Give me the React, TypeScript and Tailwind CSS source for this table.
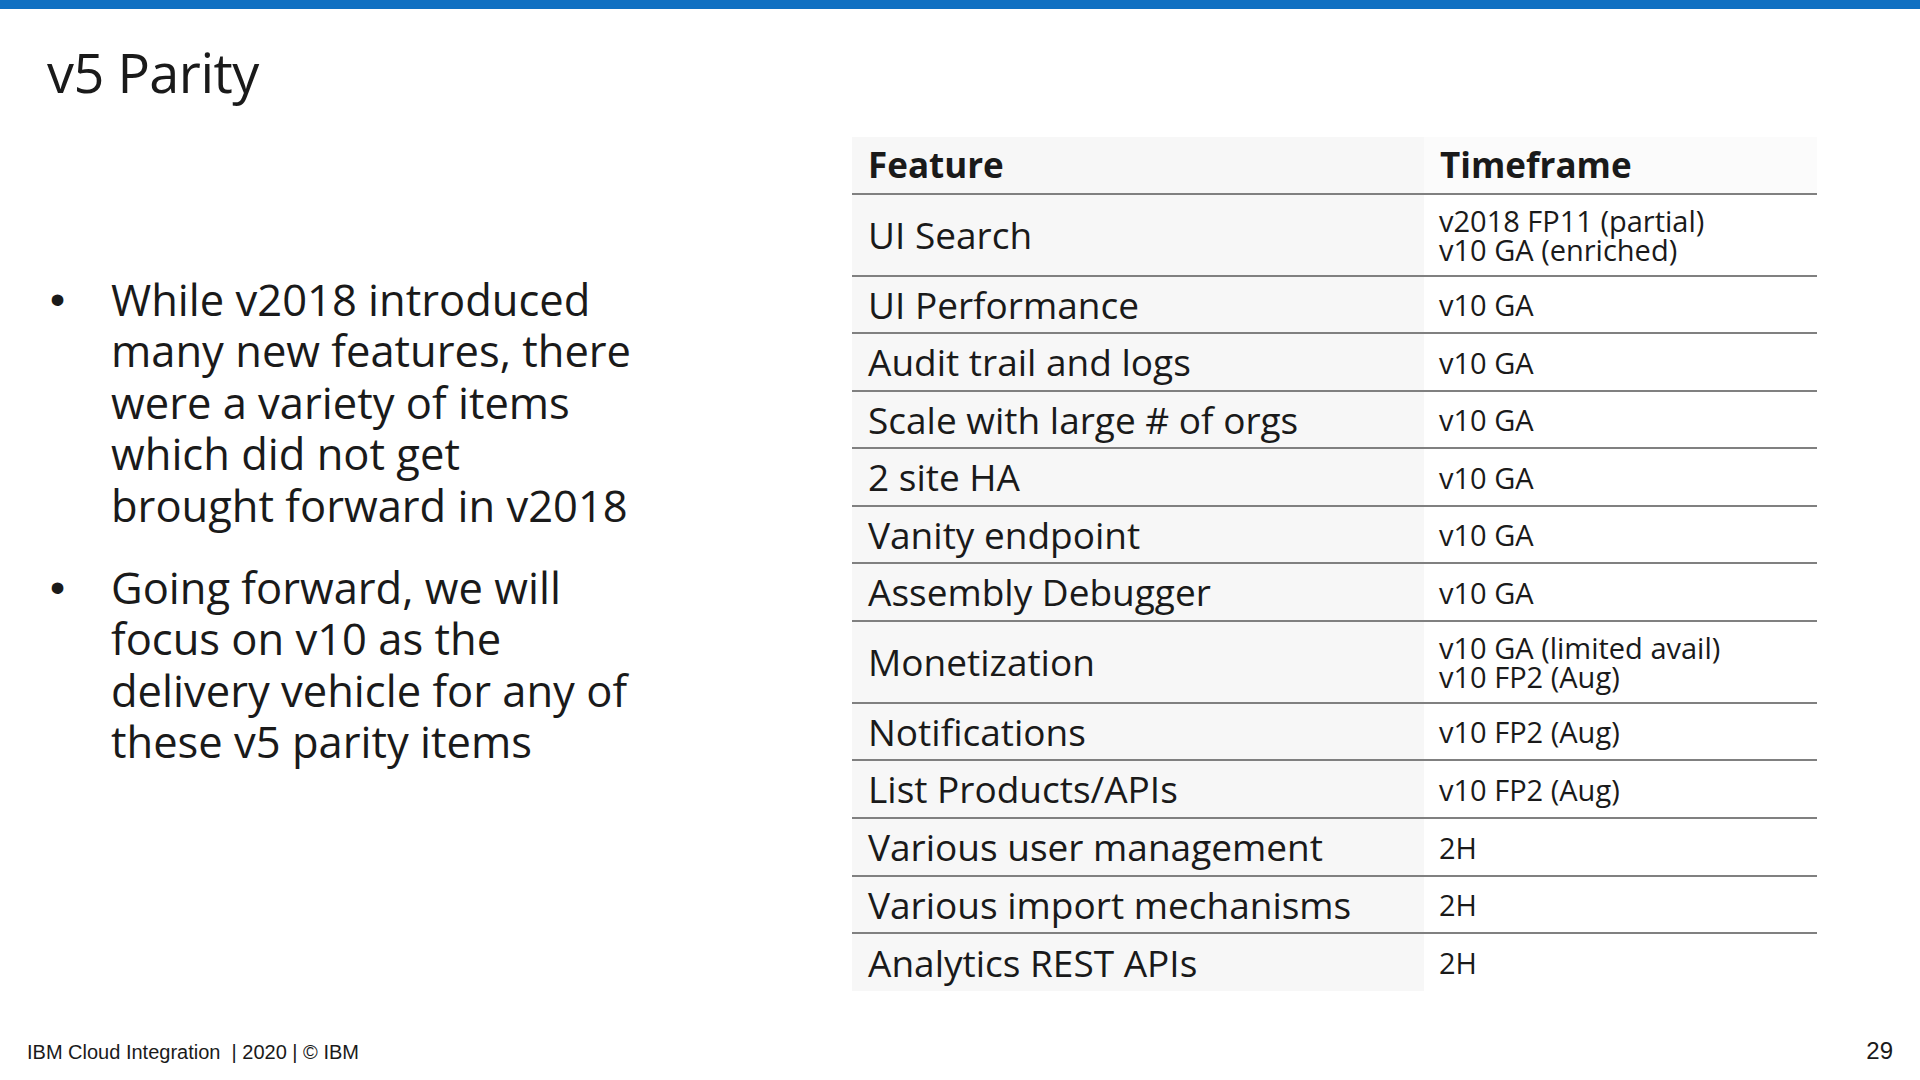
const rows: { feature: string; time: string[]; h: string; last?: boolean }[] = [
  { feature: "UI Search", time: ["v2018 FP11 (partial)", "v10 GA (enriched)"], h: "h-[82px]" },
  { feature: "UI Performance", time: ["v10 GA"], h: "h-[57px]" },
  { feature: "Audit trail and logs", time: ["v10 GA"], h: "h-[58px]" },
  { feature: "Scale with large # of orgs", time: ["v10 GA"], h: "h-[57px]" },
  { feature: "2 site HA", time: ["v10 GA"], h: "h-[58px]" },
  { feature: "Vanity endpoint", time: ["v10 GA"], h: "h-[57px]" },
  { feature: "Assembly Debugger", time: ["v10 GA"], h: "h-[58px]" },
  { feature: "Monetization", time: ["v10 GA (limited avail)", "v10 FP2 (Aug)"], h: "h-[82px]" },
  { feature: "Notifications", time: ["v10 FP2 (Aug)"], h: "h-[57px]" },
  { feature: "List Products/APIs", time: ["v10 FP2 (Aug)"], h: "h-[58px]" },
  { feature: "Various user management", time: ["2H"], h: "h-[58px]" },
  { feature: "Various import mechanisms", time: ["2H"], h: "h-[57px]" },
  { feature: "Analytics REST APIs", time: ["2H"], h: "h-[57px]", last: true },
];

// line breaks kept as in the slide
const bullets = [
  ["While v2018 introduced", "many new features, there", "were a variety of items", "which did not get", "brought forward in v2018"],
  ["Going forward, we will", "focus on v10 as the", "delivery vehicle for any of", "these v5 parity items"],
];

// each line becomes one unbreakable chunk, so the text wraps exactly there
const keepLines = (lines: string[]) => lines.map((l) => l.replace(/ /g, "\u00a0")).join(" ");

function ParityTable() {
  return (
    <div className="w-[965px] grid grid-cols-[572px_393px]">
      <div className="h-[58px] bg-[#f7f7f7] border-b-2 border-[#808080] flex items-center pl-[16px] text-[35px] font-bold">
        Feature
      </div>
      <div className="h-[58px] bg-[#fbfbfb] border-b-2 border-[#808080] flex items-center pl-[16px] text-[35px] font-bold">
        Timeframe
      </div>
      {rows.map((r) => (
        <div key={r.feature} className="contents">
          <div
            className={`${r.h} bg-[#f7f7f7] flex items-center pl-[16px] text-[37px] ${
              r.last ? "" : "border-b-2 border-[#808080]"
            }`}
          >
            {r.feature}
          </div>
          <div
            className={`${r.h} flex items-center pl-[15px] pr-[10px] text-[29px] leading-[29px] ${
              r.last ? "" : "border-b-2 border-[#808080]"
            }`}
          >
            <p>{keepLines(r.time)}</p>
          </div>
        </div>
      ))}
    </div>
  );
}

export default function App() {
  return (
    <div className="w-[1920px] h-[1080px] bg-white flex flex-col overflow-hidden text-[#1a1a1a] font-['Open_Sans',sans-serif]">
      <div className="h-[9px] bg-[#1070c2] shrink-0" />
      <h1 className="pl-[47px] pt-[36px] text-[54px] leading-none font-normal tracking-[-0.5px]">v5 Parity</h1>

      <div className="flex-1 flex items-start">
        <div className="w-[852px] shrink-0 pt-[175px] pl-[50px]">
          <ul className="flex flex-col gap-[31px]">
            {bullets.map((lines) => (
              <li key={lines[0]} className="flex text-[43.5px] leading-[51.4px]">
                <span className="w-[61px] shrink-0 font-['Liberation_Sans',sans-serif] text-[43px]">•</span>
                <p className="w-[560px]">{keepLines(lines)}</p>
              </li>
            ))}
          </ul>
        </div>
        <div className="pt-[38px]">
          <ParityTable />
        </div>
      </div>

      <div className="flex items-baseline justify-between px-[27px] pb-[17px] font-['Liberation_Sans',Arial,sans-serif]">
        <span className="text-[20px] leading-none">IBM Cloud Integration&nbsp; | 2020 | © IBM</span>
        <span className="text-[24px] leading-none">29</span>
      </div>
    </div>
  );
}
